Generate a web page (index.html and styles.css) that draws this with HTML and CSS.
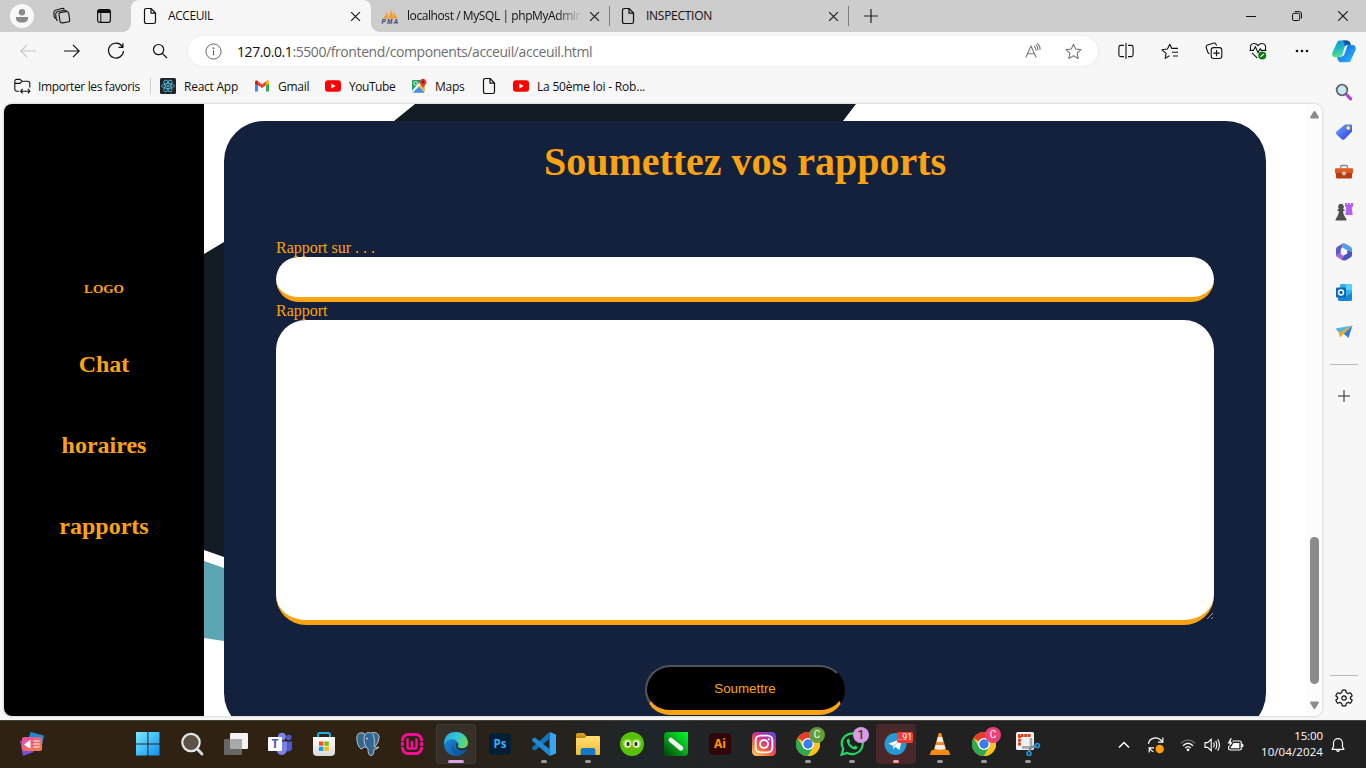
FILE: index.html
```html
<!DOCTYPE html>
<html lang="fr">
<head>
<meta charset="utf-8">
<title>ACCEUIL</title>
<link rel="stylesheet" href="styles.css">
</head>
<body>
<svg class="defs" width="0" height="0">
  <defs>
    <linearGradient id="gWin" x1="0" y1="0" x2="1" y2="1"><stop offset="0" stop-color="#7deaff"/><stop offset="1" stop-color="#0a90f5"/></linearGradient>
    <linearGradient id="gEdge" x1="0" y1="0" x2="1" y2="0.4"><stop offset="0" stop-color="#2a9fe0"/><stop offset=".55" stop-color="#33c5d5"/><stop offset="1" stop-color="#5fd76a"/></linearGradient>
    <linearGradient id="gEdge2" x1="0" y1="0" x2="1" y2="1"><stop offset="0" stop-color="#1d8fe0"/><stop offset="1" stop-color="#0b4f9e"/></linearGradient>
    <linearGradient id="gInsta" x1="0.1" y1="1" x2="0.8" y2="0"><stop offset="0" stop-color="#ffcf55"/><stop offset=".35" stop-color="#f7603c"/><stop offset=".65" stop-color="#d42c8c"/><stop offset="1" stop-color="#6b45d8"/></linearGradient>
    <linearGradient id="gFold" x1="0" y1="0" x2="0" y2="1"><stop offset="0" stop-color="#ffdf76"/><stop offset="1" stop-color="#f8bb2e"/></linearGradient>
    <linearGradient id="gCorel" x1="1" y1="0" x2="0" y2="1"><stop offset="0" stop-color="#00ff2b"/><stop offset=".5" stop-color="#05a51c"/><stop offset="1" stop-color="#033f0a"/></linearGradient>
    <linearGradient id="gNews" x1="0" y1="0" x2="1" y2="1"><stop offset="0" stop-color="#e84bb0"/><stop offset="1" stop-color="#f08038"/></linearGradient>
    <linearGradient id="gBag" x1="0" y1="0" x2="0" y2="1"><stop offset="0" stop-color="#fff"/><stop offset="1" stop-color="#d9d9dc"/></linearGradient>
    <linearGradient id="gCoA" x1="0" y1="0" x2="0.3" y2="1"><stop offset="0" stop-color="#1787d8"/><stop offset=".5" stop-color="#19b8c6"/><stop offset="1" stop-color="#5ce08a"/></linearGradient>
    <linearGradient id="gCoB" x1="0" y1="0" x2="1" y2="1"><stop offset="0" stop-color="#1b4fc0"/><stop offset=".5" stop-color="#1f8cf0"/><stop offset="1" stop-color="#2cc0fb"/></linearGradient>
    <linearGradient id="gTag" x1="0" y1="0" x2="1" y2="1"><stop offset="0" stop-color="#65a8fa"/><stop offset="1" stop-color="#3338f0"/></linearGradient>
    <symbol id="doc" viewBox="0 0 14 18"><path d="M3 1.5H8.2L12.5 6V14.8a1.7 1.7 0 0 1-1.7 1.7H3.2a1.7 1.7 0 0 1-1.7-1.7V3.2A1.7 1.7 0 0 1 3.2 1.5M8 1.8V6.2H12.3" fill="none" stroke="#111" stroke-width="1.2"/></symbol>
    <symbol id="x" viewBox="0 0 10 10"><path d="M1 1L9 9M9 1L1 9" stroke="#222" stroke-width="1.2"/></symbol>
    <symbol id="yt" viewBox="0 0 16 16"><rect x="0" y="2.2" width="16" height="11.6" rx="3" fill="#f00"/><path d="M6.3 5.5L10.7 8L6.3 10.5Z" fill="#fff"/></symbol>
    <symbol id="chrome" viewBox="0 0 24 24"><circle cx="12" cy="12" r="12" fill="#fbc116"/><path d="M12 12L1.6 6A12 12 0 0 1 22.4 6Z" fill="#e33b2e"/><path d="M1.6 6A12 12 0 0 0 12 24L17.2 15L12 12L6.8 15Z" fill="#2da94f"/><path d="M12 6H22.4A12 12 0 0 1 12 24L17.2 15Z" fill="#fcc31e"/><circle cx="12" cy="12" r="6" fill="#fff"/><circle cx="12" cy="12" r="4.7" fill="#3a7ded"/></symbol>
  </defs>
</svg>

<header class="tabstrip">
  <div class="cell profile"><svg width="24" height="24" viewBox="0 0 24 24"><circle cx="12" cy="12" r="12" fill="#f8f8f8"/><circle cx="12" cy="8.2" r="3.2" fill="#8a8a8a"/><path d="M6 13H18V14.4C18 17 15.5 18.6 12 18.6S6 17 6 14.4Z" fill="#8a8a8a"/></svg></div>
  <div class="cell c42"><svg width="18" height="18" viewBox="0 0 18 18" fill="none" stroke="#111" stroke-width="1.1"><rect x="6.4" y="5" width="9.8" height="10.6" rx="2.2" transform="rotate(-9 11 10)"/><path d="M4.6 13.6C3.5 13.4 3.4 12.6 3.2 11.8L2.7 7.2Q2.5 5.3 4.5 4.7L11.2 3.3Q12.8 3 13.5 4M2.6 11.4C1.4 11 1.3 10.3 1.1 9.3L.9 6Q.7 3.8 2.5 3.2L8.8 1.5Q10.6 1 11.3 2.2"/></svg></div>
  <div class="cell c42"><svg width="16" height="16" viewBox="0 0 16 16"><rect x="1.6" y="1.6" width="12.8" height="12.8" rx="2.2" fill="none" stroke="#111" stroke-width="1.2"/><path d="M1.5 5V3.5a2 2 0 0 1 2-2h9a2 2 0 0 1 2 2V5Z" fill="#111"/><path d="M4.8 5V14" stroke="#111"/></svg></div>
  <div class="tab active">
    <svg class="fav-doc" width="14" height="18"><use href="#doc"/></svg>
    <span class="tab-title t1">ACCEUIL</span>
    <svg class="close" width="11" height="11"><use href="#x"/></svg>
  </div>
  <div class="tab second">
    <svg class="fav-pma" width="18" height="16" viewBox="0 0 18 16"><path d="M1.500 10.500Q5 8 6 3L7 10.500ZM7 10.500Q10 6 9.300 .5L13 10.500ZM12 3L16.500 10.500H13Z" fill="#f59a2f"/><text x="0.500" y="15.700" font-size="6.400" font-weight="bold" font-style="italic" fill="#3d3f78" textLength="16.500" font-family="Liberation Sans">PMA</text></svg>
    <span class="tab-title t2">localhost / MySQL | phpMyAdmin</span>
    <svg class="close" width="11" height="11"><use href="#x"/></svg>
  </div>
  <div class="tab third">
    <svg class="fav-doc" width="14" height="18"><use href="#doc"/></svg>
    <span class="tab-title t3">INSPECTION</span>
    <svg class="close" width="11" height="11"><use href="#x"/></svg>
  </div>
  <div class="cell newtab"><svg width="14" height="14" viewBox="0 0 14 14"><path d="M7 0V14M0 7H14" stroke="#222" stroke-width="1.2"/></svg></div>
  <div class="winctl">
    <div class="cell c46"><svg width="10" height="10" viewBox="0 0 10 10"><path d="M0 5.5H10" stroke="#111"/></svg></div>
    <div class="cell c46"><svg width="10" height="10" viewBox="0 0 10 10" fill="none" stroke="#111"><rect x=".5" y="2.3" width="7.2" height="7.2" rx="1.4"/><path d="M2.6 .6H7.2Q9.5 .6 9.5 3V7.4"/></svg></div>
    <div class="cell c46"><svg width="10" height="10" viewBox="0 0 10 10"><path d="M.2 .2L9.8 9.8M9.8 .2L.2 9.8" stroke="#111" stroke-width="1.1"/></svg></div>
  </div>
</header>

<div class="middle">
  <div class="left">
    <div class="toolbar">
      <div class="cell c44"><svg width="16" height="14" viewBox="0 0 16 14"><path d="M16 7H.8M7 .8L.8 7L7 13.2" fill="none" stroke="#c6c6c6" stroke-width="1.2"/></svg></div>
      <div class="cell c44"><svg width="16" height="14" viewBox="0 0 16 14"><path d="M0 7H15.2M9 .8L15.2 7L9 13.2" fill="none" stroke="#111" stroke-width="1.2"/></svg></div>
      <div class="cell c44"><svg width="18" height="18" viewBox="0 0 18 18"><path d="M15.4 4.6A7.5 7.5 0 1 0 16.5 9M15.9 1.3V5.4H11.6" fill="none" stroke="#111" stroke-width="1.2"/></svg></div>
      <div class="cell c44"><svg width="16" height="16" viewBox="0 0 16 16"><circle cx="6.6" cy="6.6" r="5.1" fill="none" stroke="#111" stroke-width="1.2"/><path d="M10.3 10.3L15 15" stroke="#111" stroke-width="1.2"/></svg></div>
      <div class="omnibox">
        <svg width="17" height="17" viewBox="0 0 17 17"><circle cx="8.5" cy="8.5" r="7.6" fill="none" stroke="#666"/><path d="M8.5 7.3V12.3" stroke="#666" stroke-width="1.2"/><circle cx="8.5" cy="5.2" r=".9" fill="#666"/></svg>
        <span class="url"><b>127.0.0.1</b>:5500/frontend/components/acceuil/acceuil.html</span>
        <div class="cell c40"><svg width="16" height="16" viewBox="0 0 16 16" fill="none" stroke="#777" stroke-width="1.1"><path d="M.8 14.5L6 3L11.2 14.5M2.7 10.7H9.3M9.2 3.4Q11.2 5 11 7.6M10.6 1.6Q13.2 3.6 12.9 7.4M12 .4Q15.4 2.6 15.1 6.8"/></svg></div>
        <div class="cell c40"><svg width="17" height="17" viewBox="0 0 17 17"><path d="M8.5 1.2L10.7 6L16 6.6L12.1 10.2L13.2 15.5L8.5 12.8L3.8 15.5L4.9 10.2L1 6.6L6.3 6Z" fill="none" stroke="#777" stroke-width="1.1" stroke-linejoin="round"/></svg></div>
      </div>
      <div class="cell c44 split"><svg width="16" height="16" viewBox="0 0 16 16" fill="none" stroke="#111" stroke-width="1.1"><path d="M8 0V16M6 2.4H2.8Q.9 2.4 .9 4.2V11.8Q.9 13.6 2.8 13.6H6M10 2.4H13.2Q15.1 2.4 15.1 4.2V11.8Q15.1 13.6 13.2 13.6H10"/></svg></div>
      <div class="cell c44"><svg width="18" height="17" viewBox="0 0 18 17" fill="none" stroke="#111" stroke-width="1.1" stroke-linejoin="round"><path d="M8.4 12.8L4.2 15.4L5.1 10.4L1 6.8L6.4 6L8.8 1.2L10.8 5.4H17M11 9.2H17M12 13H17"/></svg></div>
      <div class="cell c44"><svg width="18" height="18" viewBox="0 0 18 18" fill="none" stroke="#111" stroke-width="1.1"><rect x="6.2" y="5.6" width="10.6" height="10.9" rx="2.4"/><path d="M11.5 8V14.2M8.4 11.1H14.6M4.4 11.8Q3.3 11.6 2.8 10.2L1.3 5.8Q.7 3.8 2.6 3.1L8.2 1.2Q10.2 .6 11 2.2L11.5 3.6"/></svg></div>
      <div class="cell c44"><svg width="18" height="18" viewBox="0 0 18 18" fill="none" stroke="#111" stroke-width="1.1"><path d="M1.6 7.6Q.4 2 4.8 1.5Q7.4 1.3 9 3.6Q10.6 1.3 13.2 1.5Q17.6 2 16.4 7.6M.5 8.4H4.4L6.4 4.8L9 10.6L11.2 6.8L12.4 8.4H17.5M3 10.8L8.4 16.2"/><circle cx="13.2" cy="13.6" r="4" fill="#107c10" stroke="none"/><path d="M11.5 14.8L14.9 12" stroke="#fff"/></svg></div>
      <div class="cell c44"><svg width="14" height="4" viewBox="0 0 14 4" fill="#111"><circle cx="2" cy="2" r="1.3"/><circle cx="7" cy="2" r="1.3"/><circle cx="12" cy="2" r="1.3"/></svg></div>
    </div>

    <nav class="bookmarks">
      <div class="bm import"><svg width="17" height="16" viewBox="0 0 17 16" fill="none" stroke="#111" stroke-width="1.1"><path d="M5 13.2H3Q.8 13.2 .8 11V3.4Q.8 1.4 2.6 1.4H6L8 3.3H13.6Q15.8 3.3 15.8 5.4V9.6M.8 5.4H6L8 3.4M6.7 13.2H15.8M8.6 10.9L6.6 13.2L8.6 15.4M13.9 10.9L15.9 13.2L13.9 15.4"/></svg><span>Importer les favoris</span></div>
      <div class="bm react"><svg width="16" height="16" viewBox="0 0 16 16"><rect width="16" height="16" rx="1.5" fill="#20232a"/><g fill="none" stroke="#4fb7d3" stroke-width=".9"><ellipse cx="8" cy="8" rx="6.4" ry="2.5"/><ellipse cx="8" cy="8" rx="6.4" ry="2.5" transform="rotate(60 8 8)"/><ellipse cx="8" cy="8" rx="6.4" ry="2.5" transform="rotate(120 8 8)"/></g><circle cx="8" cy="8" r="1.2" fill="#4fb7d3"/></svg><span>React App</span></div>
      <div class="bm gmail"><svg width="16" height="16" viewBox="0 0 16 16"><path d="M1 4V13.4H4V6.4Z" fill="#4285f4"/><path d="M15 4V13.4H12V6.4Z" fill="#34a853"/><path d="M1 4.2Q1.3 2 3.3 2.8L8 6.4L12.7 2.8Q14.7 2 15 4.2L12 7.2L8 10L4 7.2Z" fill="#ea4335"/><path d="M12 3.4L12.7 2.8Q14.9 2 15 4.6V5.4L12 7.5Z" fill="#fbbc04"/><path d="M4 3.4L3.3 2.8Q1.1 2 1 4.6V5.4L4 7.5Z" fill="#c5221f"/></svg><span>Gmail</span></div>
      <div class="bm youtube"><svg width="16" height="16"><use href="#yt"/></svg><span>YouTube</span></div>
      <div class="bm maps"><svg width="16" height="16" viewBox="0 0 16 16"><rect x="1" y="2" width="12.5" height="12.5" rx="1" fill="#1fa463"/><path d="M1 12.5L11 2H13.5V4.4L2.8 14.5H1Z" fill="#f4f4f4"/><path d="M7 8.4L13.5 14.5V8L11 5Z" fill="#fccb2f"/><path d="M2 14.5L8 8.6L13.3 14.5Z" fill="#4b8df8"/><circle cx="4.6" cy="5.4" r="1.8" fill="none" stroke="#fff" stroke-width=".9"/><path d="M12 11.5Q11.6 8.2 9.6 6.4A3.3 3.3 0 1 1 14.4 6.4Q12.4 8.2 12 11.5Z" fill="#e2392e"/><circle cx="12" cy="4" r="1.2" fill="#7b1a14"/></svg><span>Maps</span></div>
      <div class="bm blank"><svg width="14" height="18"><use href="#doc"/></svg></div>
      <div class="bm rob"><svg width="16" height="16"><use href="#yt"/></svg><span>La 50ème loi - Rob...</span></div>
    </nav>

    <div class="viewport">
      <aside class="site-nav">
        <h6>LOGO</h6>
        <h2>Chat</h2>
        <h2>horaires</h2>
        <h2>rapports</h2>
      </aside>
      <main class="page">
        <svg class="backdrop" width="1103" height="612" viewBox="0 0 1103 612"><path d="M211 0H652L600 68L20 453L0 446V150L20 138L190 17Z" fill="#111c24"/><path d="M0 457L20 464V537L0 534Z" fill="#5ba6b2"/></svg>
        <form class="card">
          <h1>Soumettez vos rapports</h1>
          <label>Rapport sur . . .</label>
          <input type="text">
          <label>Rapport</label>
          <textarea></textarea>
          <button type="button">Soumettre</button>
        </form>
      </main>
      <div class="scrollbar">
        <svg width="9" height="8" viewBox="0 0 9 8"><path d="M4.5 0Q5.200 0 5.600 .8L8.800 6Q9.200 7.500 7.800 7.500H1.200Q-.2 7.500 .2 6L3.400 .8Q3.800 0 4.500 0Z" fill="#8b8b8b"/></svg>
        <div class="thumb"></div>
        <svg width="9" height="8" viewBox="0 0 9 8"><path d="M4.5 8Q5.200 8 5.600 7.200L8.800 2Q9.200 .5 7.800 .5H1.200Q-.2 .5 .2 2L3.400 7.200Q3.800 8 4.500 8Z" fill="#8b8b8b"/></svg>
      </div>
    </div>
  </div>

  <aside class="edgebar">
    <div class="cell copilot"><svg width="24" height="23" viewBox="0 0 24 23"><path d="M5.6 1.5Q6.3 .4 8 .4H15Q17.5 .4 18.3 3L18.8 4.8H15.4Q13.3 4.8 12.5 7.4L10.4 14.5Q9.4 17.2 6.8 17.2H3Q-.3 17 .2 13Z" fill="url(#gCoA)"/><path d="M18.4 21.2Q17.7 22.3 16 22.3H9Q6.5 22.3 5.7 19.6L5.1 17.3H7.6Q9.9 17.2 10.8 14.5L13.2 7.4Q14.2 5 16.8 5H20.6Q24.2 5.4 23.7 9.6Z" fill="url(#gCoB)"/><path d="M10.4 .4H15Q17.5 .4 18.3 3L18.8 4.8H15.4Q13.6 4.8 12.6 6.8Q13 1.5 10.4 .4Z" fill="#1a4fa3"/><path d="M13 6.600Q14 5.400 15.500 5.400L12.700 13.500Q11.800 16.500 9.300 16.600Q10.500 15.600 10.900 14.200Z" fill="#f4fbff"/></svg></div>
    <div class="cell"><svg width="18" height="18" viewBox="0 0 18 18"><path d="M11.500 11.500L15.6 15.8" stroke="#b43cf0" stroke-width="3.2" stroke-linecap="round"/><circle cx="7" cy="7" r="5.3" fill="#c4e8fb" stroke="#666" stroke-width="1.8"/></svg></div>
    <div class="cell"><svg width="18" height="18" viewBox="0 0 18 18"><path d="M10 1.4H15.8Q17 1.4 17 2.6V8.4L9.6 16.2Q8.2 17.4 6.8 16.2L1.6 11.4Q.4 10 1.6 8.6Z" fill="url(#gTag)"/><circle cx="13.3" cy="4.9" r="1.500" fill="#fff" stroke="#f3c828" stroke-width="1.2"/></svg></div>
    <div class="cell"><svg width="18" height="16" viewBox="0 0 18 16"><path d="M5.5 4.5V2.8Q5.5 1.5 7 1.5H11Q12.5 1.5 12.5 2.8V4.5" fill="none" stroke="#888" stroke-width="1.3"/><rect x="0" y="4.2" width="18" height="5.6" rx="1" fill="#e1581d"/><path d="M1 9H17V13.2Q17 14.6 15.6 14.6H2.4Q1 14.6 1 13.2Z" fill="#b93c12"/><rect x="7.3" y="7.6" width="3.4" height="3.6" rx="1" fill="#ccc"/></svg></div>
    <div class="cell"><svg width="18" height="20" viewBox="0 0 18 20"><path d="M10 1H12V2.600H13V1H15V2.600H16V1H18V4.500L16.700 5.600L17.700 13H10.300L11.300 5.600L10 4.500Z" fill="#b55cf2"/><path d="M6 1.800A3.2 3.2 0 0 1 8 7.2H9.500V9H8Q8.200 12.5 10 15Q11.500 16 11.500 18.500H.5Q.5 16 2 15Q3.800 12.500 4 9H2.500V7.2H4A3.2 3.2 0 0 1 6 1.800Z" fill="#505050"/></svg></div>
    <div class="cell"><svg width="18" height="18" viewBox="0 0 18 18"><path d="M9 .3Q10 .3 11 .9L15.600 3.700Q17 4.600 17 6.200V11L12.300 8.200V7.200L7.500 4.600Q6.600 1 9 .3Z" fill="#529de8"/><path d="M9 .3Q6.800 1.500 7 5L5.700 6V11L1.800 13.500Q1 12.800 1 11.500V6.200Q1 4.600 2.400 3.700L7.400 .8Z" fill="#5a5bc9"/><path d="M5.700 9.500V11L8.700 12.800L16.500 8.500L17 11.800Q17 13.400 15.600 14.300L10.600 17.200Q9 18 7.400 17.200L2.400 14.300Q1.300 13.600 1 12Z" fill="#a06bd6"/><path d="M12.300 8V10.500L8.700 12.800Q9 16 6 16.400L10.600 17.200L15.600 14.300Q17 13.400 17 11.800V9Z" fill="#4652c4"/></svg></div>
    <div class="cell"><svg width="18" height="17" viewBox="0 0 18 17"><rect x="5" y="0" width="12" height="12" rx="1" fill="#32b1e8"/><rect x="11" y="0" width="6" height="6" fill="#50d5f8"/><path d="M3 9L10 13L17 8.6V15.4Q17 17 15.4 17H4.6Q3 17 3 15.4Z" fill="#1586d8"/><rect x="1" y="3.6" width="10" height="10" rx="1" fill="#0b65b8"/><circle cx="6" cy="8.6" r="2.5" fill="none" stroke="#fff" stroke-width="1.5"/></svg></div>
    <div class="cell"><svg width="18" height="16" viewBox="0 0 18 16"><path d="M.5 4.5L17.5 1.5L5 10Z" fill="#4ab8f0"/><path d="M17.5 1.5L13.4 14L8.4 9.4Z" fill="#2b7fe4"/><path d="M17.5 1.5L3.6 8.8L5.2 13.6L9 9.6Z" fill="#f5a91c"/></svg></div>
    <hr class="rule top">
    <div class="cell"><svg width="12" height="12" viewBox="0 0 12 12"><path d="M6 0V12M0 6H12" stroke="#222"/></svg></div>
    <hr class="rule bottom">
    <div class="cell"><svg width="18" height="18" viewBox="0 0 18 18" fill="none" stroke="#111" stroke-width="1.2" stroke-linejoin="round"><path d="M7.3 1.1H10.7L11.3 3.6L13 4.6L15.5 3.8L17.2 6.8L15.3 8.5V9.5L17.2 11.2L15.5 14.2L13 13.4L11.3 14.4L10.7 16.9H7.3L6.7 14.4L5 13.4L2.5 14.2L.8 11.2L2.7 9.5V8.5L.8 6.8L2.5 3.8L5 4.6L6.7 3.6Z"/><circle cx="9" cy="9" r="2.2"/></svg></div>
  </aside>
</div>

<footer class="taskbar">
  <div class="app widgets"><svg width="24" height="24" viewBox="0 0 24 24"><path d="M10.5 0L24 3.4L21.5 16H6Z" fill="#1e87d6"/><path d="M0 9L6 7L14 20L3 24Z" fill="#7c4bd8"/><rect x="2" y="5" width="20" height="14" rx="2" fill="url(#gNews)"/><path d="M4 12.500L8 9.500L10.500 8V16.500L8 15.500Z" fill="#fff"/><path d="M13.5 9H19.5M13.5 12H19.5M13.5 15H19.5" stroke="#fff" stroke-width="1.2"/></svg></div>
  <div class="app"><svg width="24" height="24" viewBox="0 0 24 24"><path d="M0 0H11.4V11.4H0ZM12.4 0H23.5V11.4H12.4ZM0 12.4H11.4V23.5H0ZM12.4 12.4H23.5V23.5H12.4Z" fill="url(#gWin)"/></svg></div>
  <div class="app"><svg width="24" height="24" viewBox="0 0 24 24"><circle cx="11" cy="10.5" r="8.7" fill="#5c5245" stroke="#e6e6e6" stroke-width="2.2"/><path d="M17.2 17L22 22" stroke="#dcdce6" stroke-width="2.8" stroke-linecap="round"/></svg></div>
  <div class="app"><svg width="24" height="24" viewBox="0 0 24 24"><rect x="0" y="7" width="18" height="16" rx="1" fill="#666"/><rect x="6" y="1" width="18" height="16" rx="1" fill="#f3f3f3"/><rect x="6" y="7" width="12" height="10" fill="#aaa"/></svg></div>
  <div class="app"><svg width="24" height="24" viewBox="0 0 24 24"><circle cx="14" cy="4.6" r="3.9" fill="#7b83eb"/><circle cx="20.8" cy="5.4" r="2.7" fill="#5059c9"/><path d="M17 9.4H24V16.5Q23.5 19.6 19 19.5Z" fill="#5059c9"/><path d="M8 9.4H19V17Q18.4 23 13.4 23Q9 22.6 8 17Z" fill="#7b83eb"/><rect x="0" y="5" width="14" height="14" rx="1" fill="#fff"/><text x="7" y="16.3" font-size="12" font-weight="bold" text-anchor="middle" fill="#4b53bc" font-family="Open Sans">T</text></svg></div>
  <div class="app"><svg width="24" height="24" viewBox="0 0 24 24"><path d="M6 6V3Q6 1 8 1H16Q18 1 18 3V6" fill="none" stroke="#18b1ea" stroke-width="2"/><path d="M1 5H23V20Q23 24 19 24H5Q1 24 1 20Z" fill="url(#gBag)"/><rect x="7" y="9.5" width="4.4" height="4.2" fill="#f25022"/><rect x="12.4" y="9.5" width="4.4" height="4.2" fill="#7fba00"/><rect x="7" y="14.7" width="4.4" height="4.2" fill="#00a4ef"/><rect x="12.4" y="14.7" width="4.4" height="4.2" fill="#ffb900"/></svg></div>
  <div class="app"><svg width="24" height="24" viewBox="0 0 24 24"><g fill="#336791" stroke="#b8c4c8" stroke-width="1"><path d="M8 1.2Q1 -.6 .8 6Q1.2 14 5 17Q6.6 17.4 8 14.6Q9.4 16.6 12 15Z"/><path d="M14.6 1Q22 -1 23.2 5Q23.2 10 18.8 15Q21 16 23 15Q21.6 17.6 18 17.2Q18 23.6 15 23.6Q11.8 23.4 12 17Q7.6 13 8 5Q9.6 -1 14.6 1Z"/><path d="M17 2Q19.6 8 18 14.6" fill="none"/></g><circle cx="11" cy="6.6" r=".8" fill="#fff"/></svg></div>
  <div class="app"><svg width="24" height="24" viewBox="0 0 24 24"><rect x="2.4" y="2.4" width="19.2" height="19.2" rx="6" fill="none" stroke="#f20f91" stroke-width="3"/><path d="M0 9.500H4M20 9.500H24M0 14.500H4M20 14.500H24" stroke="#2e2419" stroke-width="1.200"/><path d="M7.500 6.500V15Q7.500 16.500 9 16.500H15Q16.500 16.500 16.500 15V6.500M12 9V16" fill="none" stroke="#f20f91" stroke-width="2.4"/></svg></div>
  <div class="app current"><svg width="24" height="24" viewBox="0 0 24 24"><circle cx="12" cy="12" r="12" fill="url(#gEdge2)"/><path d="M0 11Q1 0 12 0Q22 .4 24 10Q24 16 18 16.4Q13 16.2 13.6 13.8Q15 12.8 14 10.4Q11 6.2 5.6 7.8Q1.4 9 0 13Z" fill="url(#gEdge)"/><path d="M12.600 11.500Q11 14.500 13.500 17Q17.500 20 23.500 16.500L24 13.500Q22 16.600 18 16.400Q13 16.200 13.600 13.800Q14.800 12.600 14 11Z" fill="#2d2b29"/><path d="M8.4 12Q6 20 14 23.8Q19 23 22 18.8Q17 21 13 19Q8.6 17 8.4 12Z" fill="#0c59a4"/></svg><i></i></div>
  <div class="app"><svg width="24" height="24" viewBox="0 0 24 24"><rect x="1" y="1.5" width="22" height="21" rx="4" fill="#001e36"/><text x="12" y="16" font-size="11.500" font-weight="bold" text-anchor="middle" fill="#40a8f8" font-family="Open Sans">Ps</text></svg></div>
  <div class="app run"><svg width="24" height="24" viewBox="0 0 24 24"><path d="M17.5 0L24 2.6V21.4L17.5 24Z" fill="#3aa5ee"/><path d="M17.5 0V7L3 18.4L.4 17L0 15.6Z" fill="#1373b5"/><path d="M0 8.4L.4 7L3 5.6L17.5 17V24Z" fill="#1f8ad2"/></svg><i></i></div>
  <div class="app run"><svg width="24" height="24" viewBox="0 0 24 24"><path d="M0 5V2.6Q0 1 1.6 1H8L10.5 4V8H0Z" fill="#d99a1c"/><rect x="0" y="4" width="24" height="19" rx="1" fill="url(#gFold)"/><path d="M0 4H10.5L8.6 6H0Z" fill="#c8870f"/><path d="M4.6 23V18Q4.6 16 6.6 16H17.4Q19.4 16 19.4 18V23Z" fill="#1478c8"/></svg><i></i></div>
  <div class="app"><svg width="24" height="24" viewBox="0 0 24 24"><circle cx="12" cy="12" r="12" fill="#58bf0a"/><path d="M3 11Q3 6.8 7.6 7Q11 7.2 12 9Q13 7.2 16.4 7Q21 6.8 21 11.4Q21 16 16.8 16Q13 15.6 12 13Q11 15.6 7.2 16Q3 16 3 11Z" fill="#8be02c"/><ellipse cx="7.6" cy="12" rx="3" ry="3.6" fill="#fff"/><ellipse cx="16.4" cy="12" rx="3" ry="3.6" fill="#fff"/><ellipse cx="8" cy="12" rx="1.6" ry="2.2" fill="#333"/><ellipse cx="16" cy="12" rx="1.6" ry="2.2" fill="#333"/><path d="M10 14.4H14L12 17Z" fill="#f49000"/></svg></div>
  <div class="app"><svg width="24" height="24" viewBox="0 0 24 24"><path d="M4 0H24V20Q24 24 20 24H0V4Q0 0 4 0Z" fill="url(#gCorel)"/><path d="M6.8 8L17 16.4" stroke="#f2f2f2" stroke-width="4.6" stroke-linecap="round"/></svg></div>
  <div class="app"><svg width="24" height="24" viewBox="0 0 24 24"><rect x="1" y="1.5" width="22" height="21" rx="4" fill="#300505"/><text x="12" y="16" font-size="12" font-weight="bold" text-anchor="middle" fill="#ff9a00" font-family="Open Sans">Ai</text></svg></div>
  <div class="app"><svg width="24" height="24" viewBox="0 0 24 24"><rect width="24" height="24" rx="4.5" fill="url(#gInsta)"/><rect x="3.6" y="3.6" width="16.8" height="16.8" rx="4.8" fill="none" stroke="#fff" stroke-width="1.9"/><circle cx="12" cy="12" r="4" fill="none" stroke="#fff" stroke-width="1.9"/><circle cx="16.8" cy="7.3" r="1.1" fill="#fff"/></svg></div>
  <div class="app run"><svg width="24" height="24"><use href="#chrome"/></svg><b class="badge green">C</b><i></i></div>
  <div class="app run"><svg width="24" height="24" viewBox="0 0 24 24"><path d="M1.6 22.6L3.2 17Q-.6 9.4 5 4.2Q10 0 16.4 2Q23 5 22.8 12Q22 20 14.4 22Q10.6 22.6 7.2 21Z" fill="#1c241e" stroke="#25d366" stroke-width="2.2"/><path d="M8.4 6.4Q6 7.6 7 10.6Q9 15.6 13.6 17.3Q16.8 18 17.6 15.2L15 13.6L13.6 15Q10.6 13.6 9.4 10.8L10.3 9.3Z" fill="#25d366"/></svg><b class="badge lilac">1</b><i></i></div>
  <div class="app run alert"><svg width="24" height="24" viewBox="0 0 24 24"><circle cx="11.5" cy="12" r="11" fill="#2599d5"/><path d="M4.4 11.8L18 6.2L15.6 18L11.4 15L9.3 17L8.8 13.8Z" fill="#fff"/><path d="M8.8 13.8L15.2 8.6L10.6 14.5L9.3 17Z" fill="#b9d7e8"/></svg><b class="badge count">..91</b><i></i></div>
  <div class="app run"><svg width="24" height="24" viewBox="0 0 24 24"><path d="M3.6 18H20.4L22.4 23H1.6Z" fill="#f68a10"/><path d="M10.8 1H13.2L18.2 18Q12 22 5.8 18Z" fill="#f28a1a"/><path d="M9.9 5H14.1L15.3 9.5Q12 11 8.7 9.5ZM7.6 13H16.4L17.4 16.6Q12 19 6.6 16.6Z" fill="#eee"/></svg><i></i></div>
  <div class="app run"><svg width="24" height="24"><use href="#chrome"/></svg><b class="badge pink">C</b><i></i></div>
  <div class="app run"><svg width="26" height="24" viewBox="0 0 26 24"><rect x="1" y="0" width="18" height="18" rx="1.5" fill="#f2f2f2"/><path d="M4.500 13.500V3.500H15.500" fill="none" stroke="#d83b16" stroke-width="2.800" stroke-dasharray="3 .7"/><path d="M16 6V15.4H7" fill="none" stroke="#a3a8ad" stroke-width="2.6"/><path d="M14 19L16 15.500L20 14" fill="none" stroke="#858b91" stroke-width="2.500"/><circle cx="14" cy="21.5" r="2" fill="none" stroke="#1c94e0" stroke-width="1.7"/><circle cx="22.4" cy="13.6" r="2" fill="none" stroke="#1c94e0" stroke-width="1.7"/></svg><i></i></div>

  <div class="tray">
    <div class="cell c32"><svg width="12" height="8" viewBox="0 0 12 8"><path d="M1 6.5L6 1.5L11 6.5" fill="none" stroke="#fff" stroke-width="1.5"/></svg></div>
    <div class="cell c32"><svg width="18" height="18" viewBox="0 0 18 18"><path d="M1.5 8Q2 2.6 8 1.8Q13 1.7 15.4 6M15.8 1.6V6.2H11M6.5 15.8Q4.5 15.2 2.6 12.2M7 11.8H2.2V16.6" fill="none" stroke="#fff" stroke-width="1.2"/><circle cx="12.7" cy="13" r="4.2" fill="#ff9d0a"/></svg></div>
    <div class="cell c24 wifi"><svg width="16" height="14" viewBox="0 0 16 14" fill="none"><path d="M1 5.4Q8 -1.5 15 5.4" stroke="#777" stroke-width="1.2"/><path d="M3 7.8Q8 2.8 13 7.8M5.2 10Q8 7.2 10.8 10" stroke="#fff" stroke-width="1.3"/><circle cx="8" cy="11.8" r="1.4" fill="#fff"/></svg></div>
    <div class="cell c24"><svg width="17" height="14" viewBox="0 0 17 14" fill="none" stroke="#fff" stroke-width="1.1"><path d="M1 4.6H3.6L7.2 1.3V12.7L3.6 9.4H1ZM9.5 4.6Q11 7 9.5 9.4M11.6 2.9Q14 7 11.6 11.1M13.7 1.3Q17.2 7 13.7 12.7"/></svg></div>
    <div class="cell c24 battery"><svg width="17" height="14" viewBox="0 0 17 14"><path d="M5.5 3H12.5Q14.3 3 14.3 4.8V10.2Q14.3 12 12.5 12H3.4Q1.6 12 1.6 10.2V8" fill="none" stroke="#fff" stroke-width="1.2"/><path d="M6.500 5H12.3V10.3H3.6V9.500Z" fill="#fff"/><path d="M15 5.6Q16.5 6 16.5 7.5T15 9.4Z" fill="#fff"/><path d="M3.5 .3L.7 5.4H3L2 9L5.7 4.3H3.6L4.7 .3Z" fill="#fff"/></svg></div>
    <div class="clock"><span class="time">15:00</span><span class="date">10/04/2024</span></div>
    <div class="cell c30"><svg width="14" height="16" viewBox="0 0 14 16"><path d="M2.5 9.8V6.2A4.5 4.5 0 0 1 11.5 6.2V9.8L13 12.3H1ZM5.2 12.6Q7 16 8.8 12.6" fill="none" stroke="#fff" stroke-width="1.2" stroke-linejoin="round"/></svg></div>
  </div>
</footer>
</body>
</html>
```
FILE: styles.css
```css
* { box-sizing: border-box; }
body {
  margin: 0;
  width: 1366px;
  height: 768px;
  overflow: hidden;
  display: flex;
  flex-direction: column;
  background: #f7f7f7;
  color: #111;
  font: 12px "Open Sans", "Noto Sans", sans-serif;
}
svg { display: block; flex: none; }
.defs { position: absolute; }
.cell { display: flex; align-items: center; justify-content: center; flex: none; height: 100%; }
.c24 { width: 24px; } .c30 { width: 30px; } .c32 { width: 32px; } .c40 { width: 40px; }
.c42 { width: 42px; } .c44 { width: 44px; } .c46 { width: 46px; }

/* Tab strip */
.tabstrip { display: flex; flex: none; height: 32px; background: #cdcdcd; }
.profile { width: 44px; margin-right: -3px; }
.tabstrip > .c42:nth-child(3) { margin-right: 6px; }
.tab { display: flex; align-items: center; flex: none; width: 240px; height: 32px; }
.tab.active { position: relative; background: #f7f7f7; border-radius: 8px 8px 0 0; padding-left: 12px; }
.tab.active::before, .tab.active::after {
  content: ""; position: absolute; bottom: 0; width: 8px; height: 8px;
}
.tab.active::before { left: -8px; background: radial-gradient(circle at 0 0, #cdcdcd 7.5px, #f7f7f7 8px); }
.tab.active::after { right: -8px; background: radial-gradient(circle at 100% 0, #cdcdcd 7.5px, #f7f7f7 8px); }
.tab.second, .tab.third { position: relative; width: 239px; padding-left: 10px; }
.tab.third { padding-left: 11px; }
.tab.second::after, .tab.third::after {
  content: ""; position: absolute; right: 0; top: 6px; width: 1px; height: 20px; background: #7c7c7c;
}
.fav-pma { margin-right: 8px; }
.fav-doc { margin-right: 11px; }
.tab-title { white-space: nowrap; overflow: hidden; line-height: 18px; }
.t1 { width: 182px; letter-spacing: -.4px; }
.t2 { width: 175px; letter-spacing: -.42px; margin-right: 7px; -webkit-mask-image: linear-gradient(90deg, #000 150px, transparent); mask-image: linear-gradient(90deg, #000 150px, transparent); }
.t3 { width: 182px; letter-spacing: -.28px; }
.newtab { width: 44px; }
.winctl { display: flex; margin-left: auto; }

/* Middle band */
.middle { display: flex; flex: none; height: 688px; }
.left { width: 1322px; flex: none; }
.toolbar { display: flex; align-items: center; height: 38px; padding-left: 6px; }
.omnibox {
  display: flex; align-items: center; flex: none;
  width: 910px; height: 30px; margin: 0 6px; padding: 0 5px 0 17px;
  background: #fff; border-radius: 15px; box-shadow: 0 0 3px #e4e4e4;
}
.url { flex: 1; margin-left: 15px; font-size: 14px; letter-spacing: -.41px; color: #6e6e6e; white-space: nowrap; }
.url b { font-weight: 400; color: #111; }

.bookmarks { display: flex; height: 34px; padding: 0 0 2px 14px; }
.bm { display: flex; align-items: center; flex: none; gap: 8px; white-space: nowrap; letter-spacing: -.25px; }
.import { position: relative; width: 146px; gap: 7px; letter-spacing: -.37px; }
.import::after { content: ""; position: absolute; right: 9px; top: 8px; width: 1px; height: 16px; background: #cfcfcf; }
.react { width: 94px; } .gmail { width: 71px; } .youtube { width: 86px; letter-spacing: -.45px; }
.maps { width: 71px; } .blank { width: 31px; } .rob { letter-spacing: -.2px; }

.viewport {
  display: flex; width: 1318px; height: 612px; margin-left: 4px;
  border-radius: 8px; overflow: hidden; background: #fff; box-shadow: 0 0 3px #bbb;
}
.site-nav {
  width: 200px; flex: none; padding-top: 177px;
  background: #000; color: #fca311; text-align: center; font-family: "Liberation Serif", serif;
}
.site-nav h6 { margin: 0 0 54px; font-size: 13.33px; line-height: 16px; }
.site-nav h2 { margin: 0 0 54px; font-size: 24px; line-height: 27px; }
.page { position: relative; width: 1103px; flex: none; height: 612px; padding: 17px 41px 0 20px; }
.backdrop { position: absolute; left: 0; top: 0; }
.card {
  position: relative; display: flex; flex-direction: column;
  height: 612px; padding: 18px 52px 0; border-radius: 40px;
  background: #14213d; color: #fca311; font: 16px "Liberation Serif", serif;
}
.card h1 { margin: 0 0 54px; font-size: 40px; line-height: 46px; text-align: center; }
.card label { line-height: 18px; }
.card input, .card textarea {
  display: block; width: 100%; height: 45px; margin: 0; padding: 0 20px;
  border: 0; border-bottom: 5px solid #fca311; border-radius: 30px; background: #fff; outline: 0;
}
.card textarea { height: 305px; flex: none; }
.card button {
  align-self: center; flex: none; width: 200px; height: 50px; margin-top: 40px;
  border: 2px outset #000; border-bottom: 5px solid #fca311; border-radius: 30px;
  background: #000; color: #fca311; font: 13.33px "Liberation Sans", sans-serif;
}
.scrollbar { width: 15px; display: flex; flex-direction: column; align-items: center; padding: 7px 0; background: #fcfcfc; }
.thumb { width: 9px; height: 147px; margin: auto 0 17px; border-radius: 5px; background: #8b8b8b; }

/* Edge sidebar */
.edgebar { display: flex; flex-direction: column; width: 44px; padding-bottom: 2px; }
.edgebar .cell { height: 40px; padding-right: 1px; }
.edgebar .copilot { padding: 0 0 2px; }
.rule { width: 28px; height: 1px; margin: 12px auto 11px 8px; border: 0; background: #b8b8b8; flex: none; }
.rule.bottom { margin: auto auto 2px 8px; }

/* Taskbar */
.taskbar {
  display: flex; flex: none; height: 48px; border-top: 1px solid #454039; padding-top: 2px; color: #fff;
  background: linear-gradient(90deg, #302213 0, #2f2213 400px, #29221b 480px, #25221e 560px, #1f262a 640px, #222324 730px, #212121 800px);
}
.app { position: relative; display: flex; flex: none; justify-content: center; width: 44px; height: 45px; padding-top: 9px; }
.widgets { width: 64px; margin-right: 62px; }
.app i { position: absolute; bottom: 5px; left: 19px; width: 6px; height: 3px; border-radius: 2px; background: #999; }
.current i { left: 14px; width: 16px; background: #dca0e4; }
.app svg { position: relative; }
.current::before, .alert::before {
  content: ""; position: absolute; left: 2px; top: 1px; width: 40px; height: 40px;
  border-radius: 4px; background: #363029; box-shadow: inset 0 0 0 1px #403a34;
}
.alert::before { background: #482829; box-shadow: none; }
.alert i { background: #ff99a4; }
.badge {
  position: absolute; left: 23px; top: 4px; width: 16px; height: 16px; border-radius: 8px;
  text-align: center; font: 10px/16px Roboto, sans-serif; color: #fff;
}
.green { background: #669c35; }
.lilac { background: #d79ae4; color: #222; font-size: 13px; }
.pink { background: #ec407a; }
.count { top: 9px; height: 11px; line-height: 11px; border-radius: 2px; background: #f23c34; font-size: 9px; }
.tray { display: flex; margin-left: auto; height: 43px; }
.wifi { margin-left: 4px; }
.battery { padding-right: 2px; }
.clock {
  display: flex; flex-direction: column; width: 75px; margin-top: 5px;
  text-align: right; line-height: 16px; font-size: 11.5px;
}
.time { letter-spacing: -.1px; }
.date { letter-spacing: .1px; }
.tray .c30 { margin-right: 13px; }
```
